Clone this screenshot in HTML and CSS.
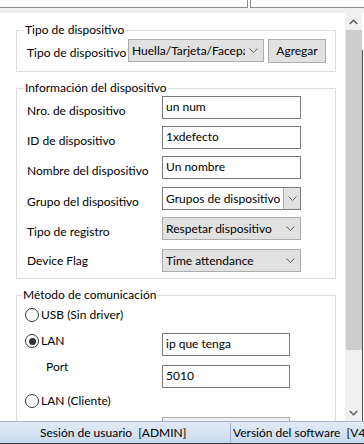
FILE: index.html
```html
<!doctype html>
<html>
<head>
<meta charset="utf-8">
<title>Dispositivo</title>
<link rel="stylesheet" href="styles.css">
</head>
<body>
	<div class="tabs">
		<div class="tab tabA"></div>
		<div class="tab tabB"></div>
	</div>
	<div class="band"></div>
	<div class="main">
		<div class="content">
			<fieldset class="group g1">
				<legend>Tipo de dispositivo</legend>
				<div class="row">
					<span class="lbl lbl1">Tipo de dispositivo</span>
					<div class="combo gray w136">
						<span class="txt">Huella/Tarjeta/Facepass</span>
						<svg class="chev" width="9" height="5" viewBox="0 0 9 5"><polyline points="0.5,0.5 4.5,4.5 8.5,0.5" fill="none" stroke="#606060" stroke-width="1"/></svg>
					</div>
					<div class="btn">Agregar</div>
				</div>
			</fieldset>
			<fieldset class="group g2">
				<legend>Información del dispositivo</legend>
				<div class="row">
					<span class="lbl">Nro. de dispositivo</span>
					<div class="field w139">un num</div>
				</div>
				<div class="row">
					<span class="lbl">ID de dispositivo</span>
					<div class="field w139">1xdefecto</div>
				</div>
				<div class="row">
					<span class="lbl">Nombre del dispositivo</span>
					<div class="field w139">Un nombre</div>
				</div>
				<div class="row r4">
					<span class="lbl">Grupo del dispositivo</span>
					<div class="combo edit w139">
						<span class="txt">Grupos de dispositivo</span>
						<span class="drop">
							<svg width="9" height="5" viewBox="0 0 9 5"><polyline points="0.5,0.5 4.5,4.5 8.5,0.5" fill="none" stroke="#606060" stroke-width="1"/></svg>
						</span>
					</div>
				</div>
				<div class="row">
					<span class="lbl">Tipo de registro</span>
					<div class="combo gray w139">
						<span class="txt">Respetar dispositivo</span>
						<svg class="chev" width="9" height="5" viewBox="0 0 9 5"><polyline points="0.5,0.5 4.5,4.5 8.5,0.5" fill="none" stroke="#606060" stroke-width="1"/></svg>
					</div>
				</div>
				<div class="row r6">
					<span class="lbl lbl6">Device Flag</span>
					<div class="combo gray w139">
						<span class="txt">Time attendance</span>
						<svg class="chev" width="9" height="5" viewBox="0 0 9 5"><polyline points="0.5,0.5 4.5,4.5 8.5,0.5" fill="none" stroke="#606060" stroke-width="1"/></svg>
					</div>
				</div>
			</fieldset>
			<fieldset class="group g3">
				<legend>Método de comunicación</legend>
				<div class="radioRow usb">
					<span class="radio"></span>
					<span>USB (Sin driver)</span>
				</div>
				<div class="optRow lan">
					<div class="radioRow">
						<span class="radio on"></span>
						<span>LAN</span>
					</div>
					<div class="field w128">ip que tenga</div>
				</div>
				<div class="optRow port">
					<span class="portLbl">Port</span>
					<div class="field w128">5010</div>
				</div>
				<div class="radioRow cliente">
					<span class="radio"></span>
					<span>LAN (Cliente)</span>
				</div>
				<div class="optRow next">
					<div class="field w128 gray"></div>
				</div>
			</fieldset>
		</div>
		<div class="scroll">
			<div class="arrow">
				<svg width="9" height="6" viewBox="0 0 9 6"><polyline points="0.8,5 4.5,1.3 8.2,5" fill="none" stroke="#606060" stroke-width="1.6"/></svg>
			</div>
			<div class="track"><div class="thumb"></div></div>
			<div class="arrow">
				<svg width="9" height="6" viewBox="0 0 9 6"><polyline points="0.8,1 4.5,4.7 8.2,1" fill="none" stroke="#606060" stroke-width="1.6"/></svg>
			</div>
		</div>
		<div class="edge"></div>
	</div>
	<div class="status">
		<div class="pane p1">Sesión de usuario  [ADMIN]</div>
		<div class="pane p2">Versión del software  [V4.5.0]</div>
	</div>
</body>
</html>
```

FILE: styles.css
```css
body {
	margin: 0;
	width: 364px;
	height: 444px;
	overflow: hidden;
	font: 12px/14px Lato, "Noto Sans", sans-serif;
	color: #000;
	background: #fff;
}
.tabs {
	display: flex;
	height: 8px;
}
.tab {
	box-sizing: border-box;
	height: 8px;
	border-bottom: 1px solid #8c8c8c;
}
.tabA {
	width: 248px;
	border-right: 1px solid #8c8c8c;
}
.tabB {
	flex: 1;
	margin-left: 2px;
	border-left: 1px solid #8c8c8c;
}
.band {
	height: 5px;
	background: #f0f0f0;
}
.main {
	display: flex;
	height: 408px;
	background: #fff;
}
.content {
	width: 345px;
	padding-top: 10px;
	box-sizing: border-box;
	overflow: hidden;
}
.group {
	box-sizing: border-box;
	width: 320px;
	margin: 0 0 9px 16px;
	padding: 0 8px 9px 10px;
	border: 1px solid #dcdcdc;
	min-width: 0;
}
.group legend {
	padding: 0 1px;
	margin-left: -3px;
	line-height: 14px;
}
.g1 {
	padding-top: 2px;
}
.g2 {
	padding-top: 1px;
	padding-bottom: 6px;
}
.g3 {
	padding-left: 8px;
	padding-bottom: 20px;
}
.row {
	display: flex;
	align-items: flex-start;
	height: 23px;
}
.row + .row {
	margin-top: 7px;
}
.row.r4 {
	margin-top: 8px;
}
.row.r6 {
	margin-top: 9px;
}
.lbl {
	width: 135px;
	padding-top: 8px;
	white-space: nowrap;
}
.lbl1 {
	width: 101px;
	padding-top: 7px;
}
.lbl6 {
	padding-top: 5px;
}
.field,
.combo {
	box-sizing: border-box;
	height: 23px;
	border: 1px solid #7a7a7a;
	padding: 0 3px;
	line-height: 19px;
	white-space: nowrap;
	overflow: hidden;
	background: #fff;
}
.combo {
	display: flex;
	align-items: center;
	position: relative;
}
.combo .txt {
	flex: 1;
	overflow: hidden;
	white-space: nowrap;
}
.combo.gray {
	background: #e1e1e1;
	border-color: #adadad;
}
.field.gray {
	background: #f0f0f0;
	border-color: #adadad;
}
.chev {
	flex: none;
	margin: 0 2px 0 4px;
}
.combo.edit {
	padding-right: 0;
}
.drop {
	display: flex;
	align-items: center;
	justify-content: center;
	width: 16px;
	height: 21px;
	background: #e1e1e1;
	border-left: 1px solid #adadad;
	flex: none;
}
.w136 {
	width: 136px;
}
.w139 {
	width: 139px;
}
.w128 {
	width: 128px;
}
.btn {
	box-sizing: border-box;
	width: 58px;
	height: 24px;
	margin-left: 4px;
	border: 1px solid #adadad;
	background: #e1e1e1;
	text-align: center;
	line-height: 22px;
}
.radioRow {
	display: flex;
	align-items: center;
	height: 14px;
	white-space: nowrap;
}
.radio {
	box-sizing: border-box;
	width: 14px;
	height: 14px;
	border: 1px solid #333;
	border-radius: 50%;
	margin-right: 2px;
	display: flex;
	align-items: center;
	justify-content: center;
	background: #fff;
}
.radio.on::after {
	content: "";
	width: 7px;
	height: 7px;
	border-radius: 50%;
	background: #333;
}
.usb {
	margin-top: 6px;
}
.optRow {
	display: flex;
	align-items: flex-start;
}
.lan {
	margin-top: 11px;
}
.lan .radioRow {
	width: 137px;
	margin-top: 1px;
}
.port {
	margin-top: 4px;
}
.portLbl {
	width: 116px;
	margin-left: 21px;
	padding-top: 0;
}
.port .field {
	margin-top: 5px;
}
.cliente {
	margin-top: 6px;
}
.next {
	margin-top: 9px;
	padding-left: 137px;
}
.scroll {
	width: 17px;
	display: flex;
	flex-direction: column;
	background: #f0f0f0;
}
.arrow {
	height: 17px;
	display: flex;
	align-items: center;
	justify-content: center;
}
.track {
	flex: 1;
}
.thumb {
	height: 320px;
	margin: 0 0 0 1px;
	background: #cdcdcd;
}
.edge {
	width: 2px;
	box-sizing: border-box;
	margin-top: 37px;
	border-left: 1px solid #505050;
}
.status {
	display: flex;
	box-sizing: border-box;
	height: 23px;
	padding-top: 1px;
	border-top: 1px solid #a8b4c4;
	border-bottom: 1px solid #3c3c3c;
	background: linear-gradient(#e2ebf6, #c8d9ee);
	white-space: pre;
	line-height: 20px;
}
.pane {
	overflow: hidden;
}
.p1 {
	width: 230px;
	box-sizing: border-box;
	padding-left: 40px;
}
.p2 {
	flex: 1;
	padding-left: 2px;
	border-left: 1px solid #9fb0c6;
}
```
